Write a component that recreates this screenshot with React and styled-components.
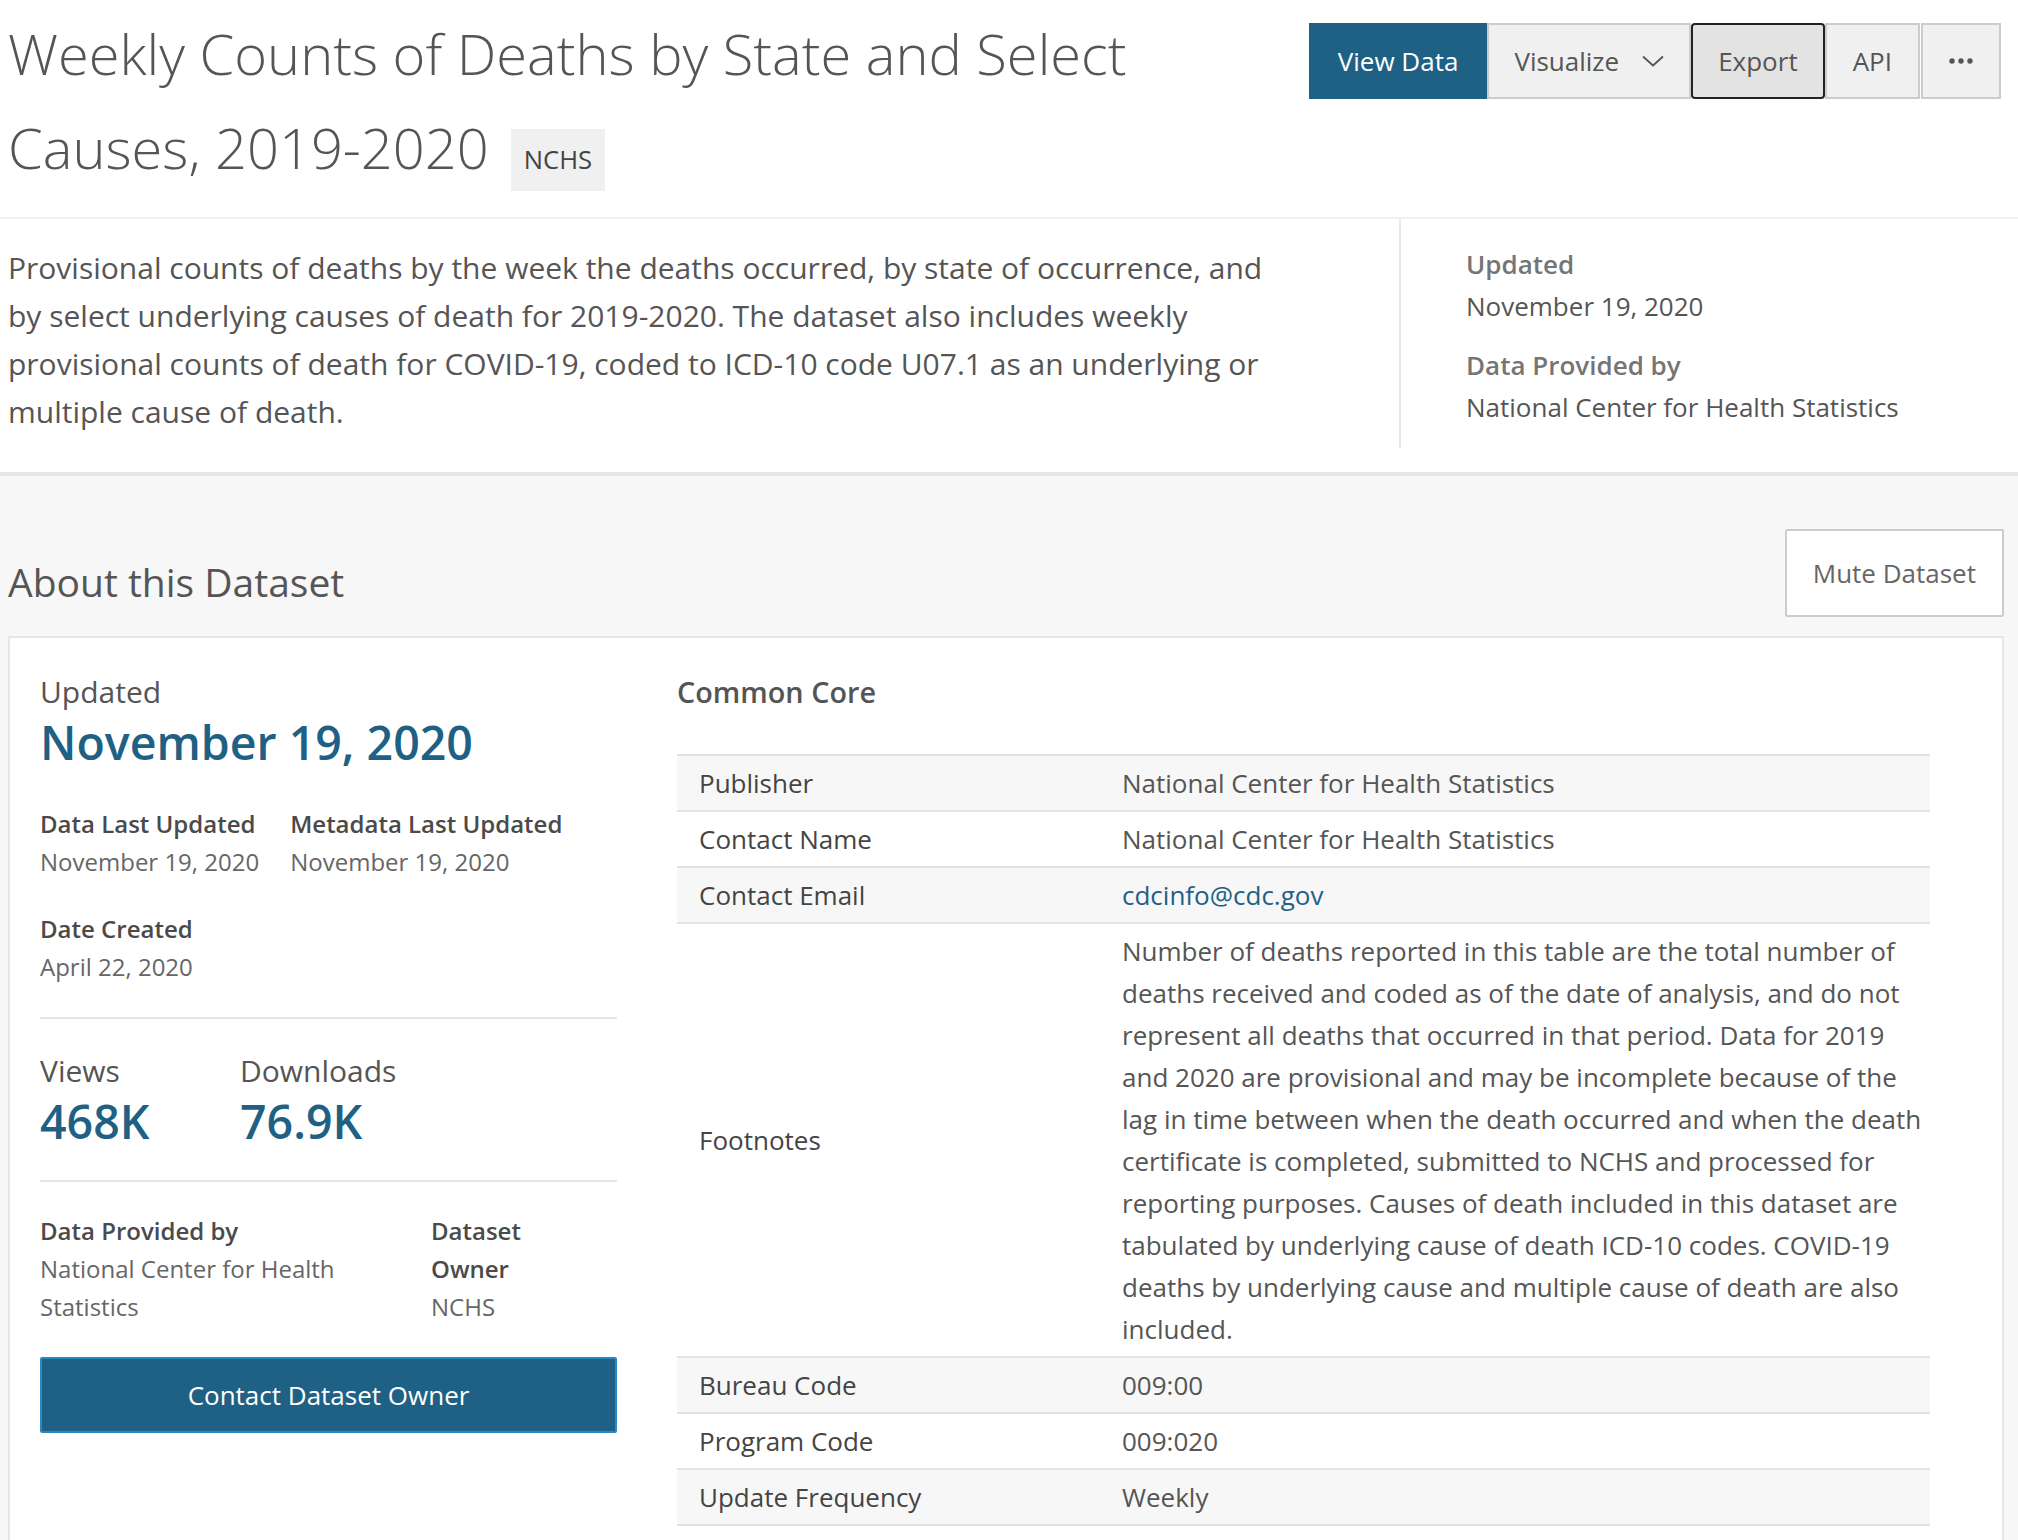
import React from "react";
import styled, { createGlobalStyle } from "styled-components";

const GlobalStyle = createGlobalStyle`
  html, body { margin: 0; padding: 0; background: #ffffff; }
  body {
    font-family: "Open Sans", "Liberation Sans", Arial, sans-serif;
    color: #555555;
    -webkit-font-smoothing: antialiased;
  }
  * { box-sizing: border-box; }
`;

const Page = styled.div`
  width: 2018px;
  min-height: 1540px;
  display: flex;
  flex-direction: column;
  background: #f7f7f7;
`;

const Header = styled.header`
  display: flex;
  align-items: flex-start;
  padding: 6px 17px 23px 8px;
  background: #ffffff;
  border-bottom: 2px solid #f0f0f0;
`;

const Title = styled.h1`
  flex: 1;
  min-width: 0;
  margin: 0;
  font-size: 56px;
  line-height: 94px;
  font-weight: 300;
  color: #555555;
`;

const Badge = styled.span`
  display: inline-block;
  margin-left: 22px;
  padding: 12px 13px;
  background: #f0f0f0;
  font-size: 25.6px;
  line-height: 38px;
  font-weight: 400;
  color: #444444;
`;

const ButtonGroup = styled.div`
  display: flex;
  flex-shrink: 0;
  margin-top: 17px;
  margin-left: 28px;
`;

const ToolButton = styled.button`
  display: flex;
  align-items: center;
  gap: 23px;
  height: 76px;
  padding: 0 ${(p) => p.$pad || 24}px;
  margin-right: ${(p) => (p.$gap ? 1 : 0)}px;
  font-family: "Open Sans", "Liberation Sans", Arial, sans-serif;
  font-size: 26px;
  line-height: 40px;
  color: ${(p) => (p.$primary ? "#ffffff" : "#555555")};
  background: ${(p) => (p.$primary ? "#1e6185" : p.$active ? "#e3e3e3" : "#f0f0f0")};
  border: 2px solid
    ${(p) => (p.$primary ? "#1e6185" : p.$active ? "#222222" : "#cccccc")};
  border-radius: ${(p) => (p.$active ? 4 : 0)}px;
  cursor: pointer;
`;

const Summary = styled.section`
  display: flex;
  padding-bottom: 24px;
  background: #ffffff;
  border-bottom: 4px solid #e6e6e6;
`;

const Description = styled.p`
  flex: 0 0 1399px;
  margin: 0;
  padding: 25px 122px 0 8px;
  font-size: 30px;
  line-height: 48px;
  color: #555555;
`;

const SideMeta = styled.div`
  flex: 1;
  padding: 24px 0 20px 65px;
  border-left: 2px solid #e8e8e8;
`;

const SideGroup = styled.div`
  & + & { margin-top: 17px; }
`;

const SideLabel = styled.div`
  font-size: 26px;
  line-height: 42px;
  font-weight: 600;
  color: #757575;
`;

const SideValue = styled.div`
  font-size: 26px;
  line-height: 42px;
  color: #555555;
`;

const About = styled.section`
  flex: 1;
  padding: 0 14px 0 8px;
  background: #f7f7f7;
`;

const AboutHead = styled.div`
  display: flex;
  justify-content: space-between;
  align-items: flex-start;
  padding-top: 53px;
  margin-bottom: 19px;
`;

const AboutTitle = styled.h2`
  margin: 0;
  padding-top: 25px;
  font-size: 39px;
  line-height: 56px;
  font-weight: 400;
  color: #555555;
`;

const MuteButton = styled.button`
  height: 88px;
  padding: 0 26px;
  font-family: "Open Sans", "Liberation Sans", Arial, sans-serif;
  font-size: 26px;
  line-height: 40px;
  color: #666666;
  background: #ffffff;
  border: 2px solid #cccccc;
  border-radius: 2px;
  cursor: pointer;
`;

const Card = styled.div`
  display: grid;
  grid-template-columns: 577px 1253px;
  column-gap: 60px;
  align-items: start;
  min-height: 920px;
  padding: 34px 72px 40px 30px;
  background: #ffffff;
  border: 2px solid #e6e6e6;
  border-bottom: none;
`;

const LeftCol = styled.div`
  display: flex;
  flex-direction: column;
`;

const BigLabel = styled.div`
  font-size: 30px;
  line-height: 40px;
  font-weight: 400;
  color: #555555;
`;

const BigValue = styled.div`
  font-size: 46.5px;
  line-height: 60px;
  font-weight: 600;
  color: #1e6185;
`;

const DateRow = styled.div`
  display: flex;
  gap: 31px;
  margin-top: ${(p) => p.$mt || 0}px;
`;

const Field = styled.div`
  max-width: ${(p) => (p.$max ? `${p.$max}px` : "none")};
`;

const FieldLabel = styled.div`
  font-size: 24px;
  line-height: 38px;
  font-weight: 600;
  color: #4a4a4a;
`;

const FieldValue = styled.div`
  font-size: 24px;
  line-height: 38px;
  color: #666666;
`;

const Divider = styled.hr`
  width: 100%;
  margin: ${(p) => p.$top}px 0 0;
  border: none;
  border-top: 2px solid #e6e6e6;
`;

const StatRow = styled.div`
  display: flex;
  margin-top: 32px;
`;

const Stat = styled.div`
  width: 200px;
`;

const OwnerGrid = styled.div`
  display: grid;
  grid-template-columns: 361px 140px;
  column-gap: 30px;
  margin-top: 30px;
`;

const ContactButton = styled.button`
  width: 577px;
  height: 76px;
  margin-top: 31px;
  font-family: "Open Sans", "Liberation Sans", Arial, sans-serif;
  font-size: 26px;
  color: #ffffff;
  background: #1e6185;
  border: 2px solid #2a88c2;
  border-radius: 2px;
  cursor: pointer;
`;

const RightCol = styled.div``;

const CoreTitle = styled.h3`
  margin: 0 0 42px;
  font-size: 28.8px;
  line-height: 40px;
  font-weight: 600;
  color: #555555;
`;

const Table = styled.table`
  width: 1253px;
  border-collapse: collapse;
  table-layout: fixed;
  border-top: 2px solid #e3e3e3;
`;

const Row = styled.tr`
  background: ${(p) => (p.$shade ? "#f7f7f7" : "#ffffff")};
  border-bottom: 2px solid #e3e3e3;
`;

const KeyCell = styled.td`
  width: 423px;
  padding: 6px 22px;
  font-size: 26px;
  line-height: 42px;
  color: #444444;
  vertical-align: middle;
`;

const ValueCell = styled.td`
  padding: 6px 4px 6px 22px;
  font-size: 26px;
  line-height: 42px;
  color: #555555;
  vertical-align: middle;
`;

const Link = styled.a`
  color: #1e6185;
  text-decoration: none;
`;

const Chevron = () => (
  <svg width="22" height="12" viewBox="0 0 22 12" fill="none">
    <path d="M1 1.5 L11 10.5 L21 1.5" stroke="#555" strokeWidth="1.8" />
  </svg>
);

const Dots = () => (
  <svg width="24" height="6" viewBox="0 0 24 6">
    <circle cx="3" cy="3" r="2.7" fill="#555" />
    <circle cx="12" cy="3" r="2.7" fill="#555" />
    <circle cx="21" cy="3" r="2.7" fill="#555" />
  </svg>
);

const footnote =
  "Number of deaths reported in this table are the total number of deaths received and coded as of the date of analysis, and do not represent all deaths that occurred in that period. Data for 2019 and 2020 are provisional and may be incomplete because of the lag in time between when the death occurred and when the death certificate is completed, submitted to NCHS and processed for reporting purposes. Causes of death included in this dataset are tabulated by underlying cause of death ICD-10 codes. COVID-19 deaths by underlying cause and multiple cause of death are also included.";

const rows = [
  ["Publisher", "National Center for Health Statistics"],
  ["Contact Name", "National Center for Health Statistics"],
  ["Contact Email", <Link href="#">cdcinfo@cdc.gov</Link>],
  ["Footnotes", footnote],
  ["Bureau Code", "009:00"],
  ["Program Code", "009:020"],
  ["Update Frequency", "Weekly"],
];

export default function App() {
  return (
    <Page>
      <GlobalStyle />
      <Header>
        <Title>
          Weekly Counts of Deaths by State and Select Causes, 2019-2020
          <Badge>NCHS</Badge>
        </Title>
        <ButtonGroup>
          <ToolButton $primary $pad={27}>View Data</ToolButton>
          <ToolButton $pad={25}>
            Visualize <Chevron />
          </ToolButton>
          <ToolButton $active $pad={25}>Export</ToolButton>
          <ToolButton $pad={26} $gap>API</ToolButton>
          <ToolButton $pad={26}>
            <Dots />
          </ToolButton>
        </ButtonGroup>
      </Header>

      <Summary>
        <Description>
          Provisional counts of deaths by the week the deaths occurred, by state of
          occurrence, and by select underlying causes of death for 2019-2020. The
          dataset also includes weekly provisional counts of death for COVID-19,
          coded to ICD-10 code U07.1 as an underlying or multiple cause of death.
        </Description>
        <SideMeta>
          <SideGroup>
            <SideLabel>Updated</SideLabel>
            <SideValue>November 19, 2020</SideValue>
          </SideGroup>
          <SideGroup>
            <SideLabel>Data Provided by</SideLabel>
            <SideValue>National Center for Health Statistics</SideValue>
          </SideGroup>
        </SideMeta>
      </Summary>

      <About>
        <AboutHead>
          <AboutTitle>About this Dataset</AboutTitle>
          <MuteButton>Mute Dataset</MuteButton>
        </AboutHead>
        <Card>
          <LeftCol>
            <BigLabel>Updated</BigLabel>
            <BigValue>November 19, 2020</BigValue>
            <DateRow $mt={33}>
              <Field>
                <FieldLabel>Data Last Updated</FieldLabel>
                <FieldValue>November 19, 2020</FieldValue>
              </Field>
              <Field>
                <FieldLabel>Metadata Last Updated</FieldLabel>
                <FieldValue>November 19, 2020</FieldValue>
              </Field>
            </DateRow>
            <DateRow $mt={29}>
              <Field>
                <FieldLabel>Date Created</FieldLabel>
                <FieldValue>April 22, 2020</FieldValue>
              </Field>
            </DateRow>
            <Divider $top={31} />
            <StatRow>
              <Stat>
                <BigLabel>Views</BigLabel>
                <BigValue>468K</BigValue>
              </Stat>
              <Stat>
                <BigLabel>Downloads</BigLabel>
                <BigValue>76.9K</BigValue>
              </Stat>
            </StatRow>
            <Divider $top={29} />
            <OwnerGrid>
              <Field>
                <FieldLabel>Data Provided by</FieldLabel>
                <FieldValue>National Center for Health Statistics</FieldValue>
              </Field>
              <Field $max={120}>
                <FieldLabel>Dataset Owner</FieldLabel>
                <FieldValue>NCHS</FieldValue>
              </Field>
            </OwnerGrid>
            <ContactButton>Contact Dataset Owner</ContactButton>
          </LeftCol>

          <RightCol>
            <CoreTitle>Common Core</CoreTitle>
            <Table>
              <tbody>
                {rows.map(([k, v], i) => (
                  <Row key={k} $shade={i % 2 === 0}>
                    <KeyCell>{k}</KeyCell>
                    <ValueCell>{v}</ValueCell>
                  </Row>
                ))}
              </tbody>
            </Table>
          </RightCol>
        </Card>
      </About>
    </Page>
  );
}
